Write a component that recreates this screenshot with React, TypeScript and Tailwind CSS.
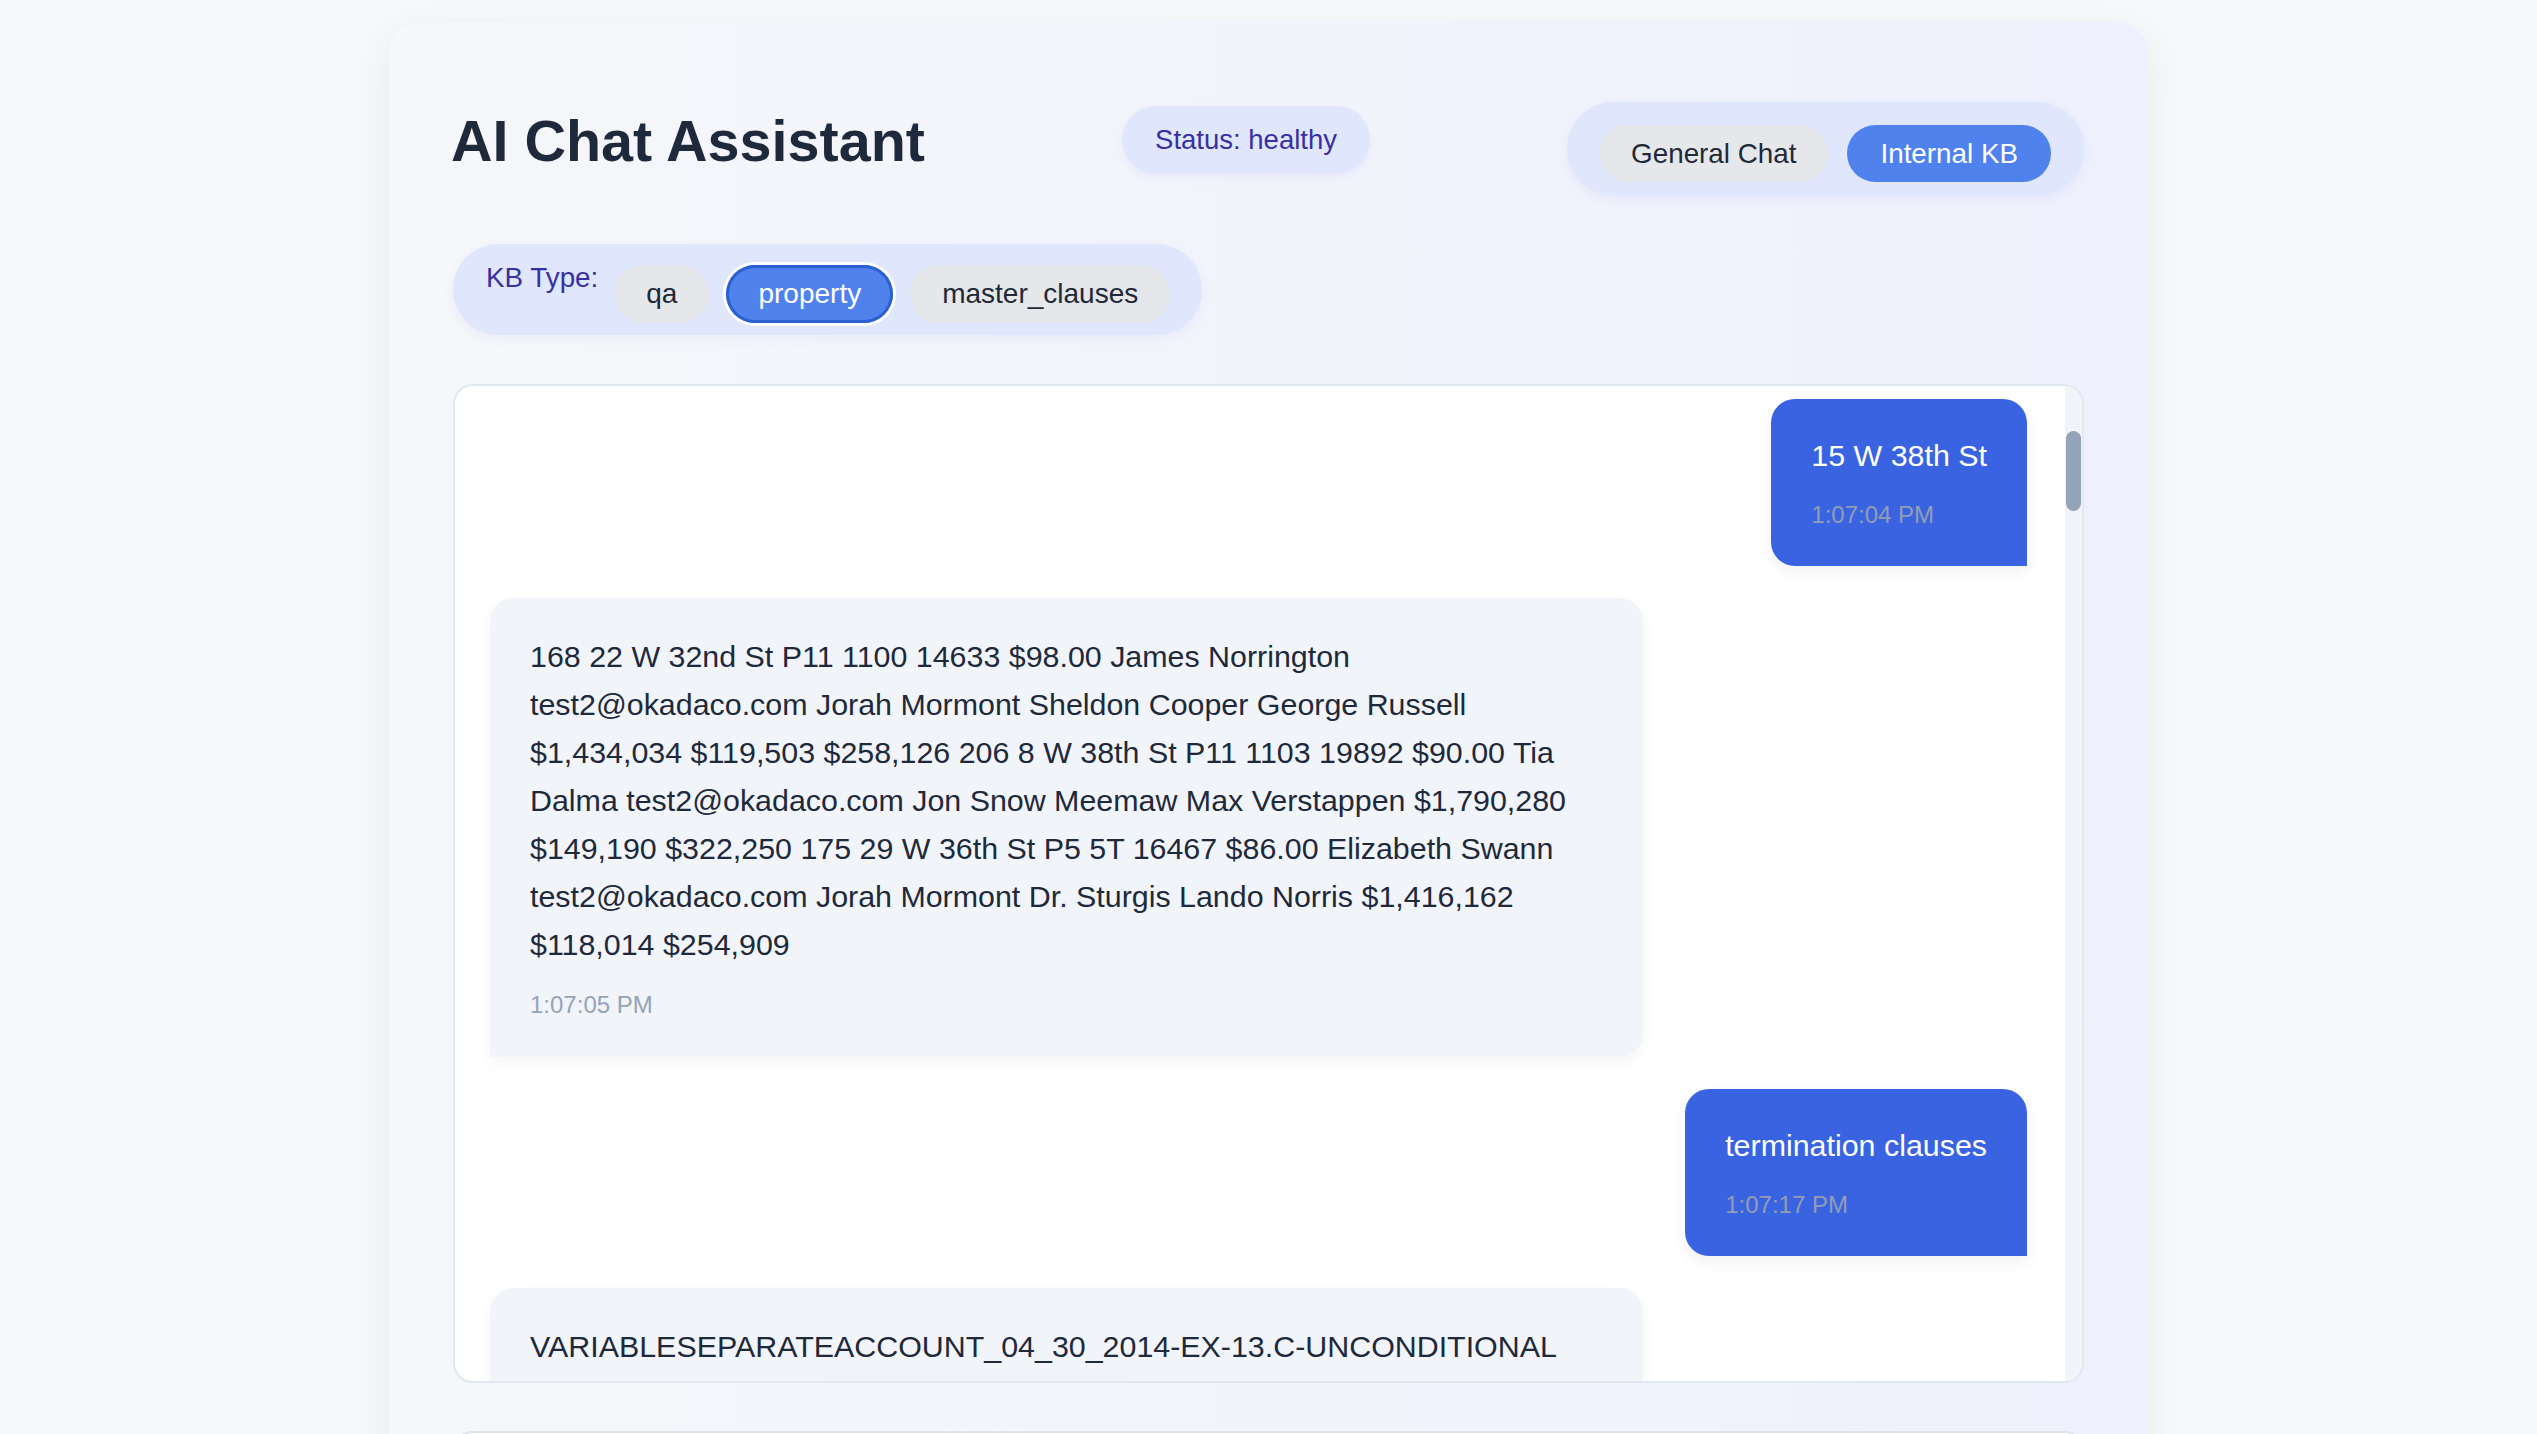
import { useState } from 'react';

interface Message {
  role: 'user' | 'assistant';
  text: string;
  time: string;
}

const messages: Message[] = [
  { role: 'user', text: '15 W 38th St', time: '1:07:04 PM' },
  {
    role: 'assistant',
    text: '168 22 W 32nd St P11 1100 14633 $98.00 James Norrington test2@okadaco.com Jorah Mormont Sheldon Cooper George Russell $1,434,034 $119,503 $258,126 206 8 W 38th St P11 1103 19892 $90.00 Tia Dalma test2@okadaco.com Jon Snow Meemaw Max Verstappen $1,790,280 $149,190 $322,250 175 29 W 36th St P5 5T 16467 $86.00 Elizabeth Swann test2@okadaco.com Jorah Mormont Dr. Sturgis Lando Norris $1,416,162 $118,014 $254,909',
    time: '1:07:05 PM',
  },
  { role: 'user', text: 'termination clauses', time: '1:07:17 PM' },
  {
    role: 'assistant',
    text: 'VARIABLESEPARATEACCOUNT_04_30_2014-EX-13.C-UNCONDITIONAL CAPITAL MAINTENANCE AGREEMENT.PDF (Number of pages: 4) Termination. This Agreement shall terminate upon the earlier of the date on which the Company and the Parent agree in writing to terminate it.',
    time: '1:07:20 PM',
  },
];

const kbTypes = ['qa', 'property', 'master_clauses'];

function Bubble({ msg }: { msg: Message }) {
  if (msg.role === 'user') {
    return (
      <div className="flex justify-end">
        <div className="bg-[#3a63e2] text-white rounded-[24px] rounded-br-none px-[40px] pt-[32px] pb-[33px] shadow-[0_6px_16px_rgba(15,23,42,0.06)]">
          <div className="text-[30.4px] leading-[48px]">{msg.text}</div>
          <div className="mt-[18px] text-[24px] leading-[36px] text-[#919db3]">{msg.time}</div>
        </div>
      </div>
    );
  }
  return (
    <div className="flex justify-start">
      <div className="w-[1153px] bg-[#f1f4f9] text-[#1e293b] rounded-[24px] rounded-bl-none px-[40px] pt-[34px] pb-[34px] shadow-[0_6px_16px_rgba(15,23,42,0.04)]">
        <div className="text-[30.4px] leading-[48px]">{msg.text}</div>
        <div className="mt-[19px] text-[24px] leading-[36px] text-[#94a3b8]">{msg.time}</div>
      </div>
    </div>
  );
}

export default function App() {
  const [mode, setMode] = useState('kb');
  const [kbType, setKbType] = useState('property');

  return (
    <div className="min-h-screen bg-[#f7f8fa] font-['Liberation_Sans',Arial,sans-serif] overflow-hidden">
      <div className="mx-auto mt-[22px] w-[1759px] min-h-[1500px] rounded-[32px] bg-linear-to-r from-[#f6f7fa] to-[#eef1fd] pt-[80px] pl-[64px] pr-[64px] shadow-[0_10px_40px_rgba(15,23,42,0.06)]">
        {/* header */}
        <div className="flex items-start justify-between">
          <h1 className="mt-[5px] -ml-[2px] text-[57.5px] leading-[68px] font-bold text-[#1e293b]">AI Chat Assistant</h1>
          <div className="mt-[4px] h-[68px] flex items-center px-[33px] rounded-full bg-[#e0e6fc] text-[#3730a3] text-[27.5px] shadow-[0_4px_10px_rgba(79,70,229,0.06)]">
            Status: healthy
          </div>
          <div className="flex gap-[19px] pl-[32px] pr-[33px] pt-[23px] pb-[13px] rounded-full bg-[#e0e6fc] shadow-[0_4px_12px_rgba(79,70,229,0.07)]">
            <button
              onClick={() => setMode('general')}
              className={`h-[57px] px-[32px] rounded-full text-[27.8px] ${mode === 'general' ? 'bg-[#5082ee] text-white' : 'bg-[#e5e7eb] text-[#1f2937]'}`}
            >
              General Chat
            </button>
            <button
              onClick={() => setMode('kb')}
              className={`h-[57px] px-[33px] rounded-full text-[27.8px] ${mode === 'kb' ? 'bg-[#5082ee] text-white' : 'bg-[#e5e7eb] text-[#1f2937]'}`}
            >
              Internal KB
            </button>
          </div>
        </div>

        {/* kb type selector */}
        <div className="mt-[49px] flex">
          <div className="flex items-start gap-[17px] pl-[33px] pr-[32px] pt-[21px] pb-[12px] rounded-full bg-[#e0e6fc] shadow-[0_4px_12px_rgba(79,70,229,0.06)]">
            <span className="-mt-[3px] mr-[-1px] text-[27.8px] leading-[32px] text-[#3730a3]">KB Type:</span>
            {kbTypes.map((t) => (
              <button
                key={t}
                onClick={() => setKbType(t)}
                className={`h-[58px] px-[32px] rounded-full text-[28px] ${
                  kbType === t
                    ? 'bg-[#5082ee] text-white shadow-[inset_0_0_0_3px_#2c5fcf,0_0_0_3px_#ffffff]'
                    : 'bg-[#e5e7eb] text-[#1f2937]'
                }`}
              >
                {t}
              </button>
            ))}
          </div>
        </div>

        {/* chat window */}
        <div className="relative mt-[49px] h-[999px] rounded-[20px] border-2 border-[#e2e8f0] bg-white overflow-hidden">
          <div className="flex flex-col gap-[32px] pl-[35px] pr-[55px] pt-[13px]">
            {messages.map((m, i) => (
              <Bubble key={i} msg={m} />
            ))}
          </div>
          <div className="absolute top-0 bottom-0 right-0 w-[17px] bg-[#f1f5f9] rounded-tr-[18px]">
            <div className="absolute top-[45px] left-[1px] w-[15px] h-[80px] rounded-full bg-[#94a3b8]" />
          </div>
        </div>

        {/* input area (mostly below the fold) */}
        <div className="mt-[48px] h-[110px] rounded-[20px] border-2 border-[#dfe3ea] bg-white" />
      </div>
    </div>
  );
}
